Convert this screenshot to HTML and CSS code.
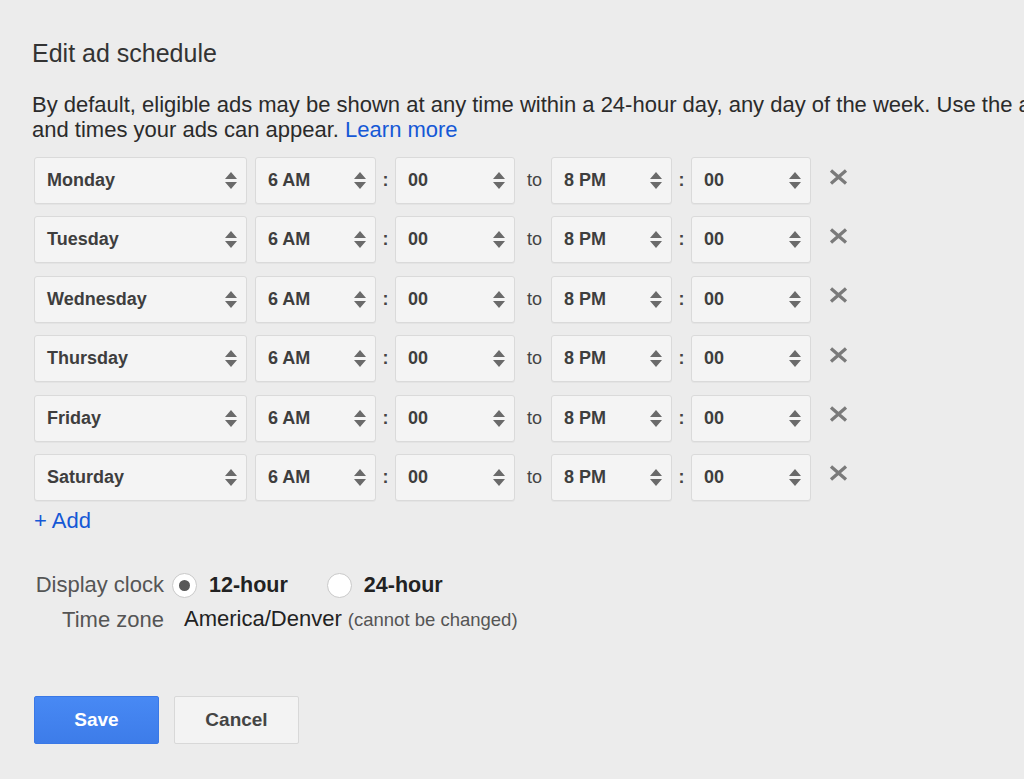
FILE: index.html
```html
<!DOCTYPE html>
<html>
<head>
<meta charset="utf-8">
<link rel="stylesheet" href="styles.css">
</head>
<body>
<div class="page">
  <h1 class="title">Edit ad schedule</h1>
  <p class="intro">By default, eligible ads may be shown at any time within a 24-hour day, any day of the week. Use the ad schedule to choose the days<br>and times your ads can appear. <a class="link" href="#">Learn more</a></p>

  <div class="rows">
    <div class="row">
      <div class="select day"><span>Monday</span><svg class="arr" viewBox="0 0 12 17"><path d="M6 0L12 7H0Z M0 10H12L6 17Z"/></svg></div>
      <div class="select hr"><span>6 AM</span><svg class="arr" viewBox="0 0 12 17"><path d="M6 0L12 7H0Z M0 10H12L6 17Z"/></svg></div>
      <span class="colon">:</span>
      <div class="select mn"><span>00</span><svg class="arr" viewBox="0 0 12 17"><path d="M6 0L12 7H0Z M0 10H12L6 17Z"/></svg></div>
      <span class="to">to</span>
      <div class="select hr"><span>8 PM</span><svg class="arr" viewBox="0 0 12 17"><path d="M6 0L12 7H0Z M0 10H12L6 17Z"/></svg></div>
      <span class="colon">:</span>
      <div class="select mn"><span>00</span><svg class="arr" viewBox="0 0 12 17"><path d="M6 0L12 7H0Z M0 10H12L6 17Z"/></svg></div>
      <svg class="rm" viewBox="0 0 19 16"><path d="M2 1.5L17 14.5M17 1.5L2 14.5"/></svg>
    </div>
    <div class="row">
      <div class="select day"><span>Tuesday</span><svg class="arr" viewBox="0 0 12 17"><path d="M6 0L12 7H0Z M0 10H12L6 17Z"/></svg></div>
      <div class="select hr"><span>6 AM</span><svg class="arr" viewBox="0 0 12 17"><path d="M6 0L12 7H0Z M0 10H12L6 17Z"/></svg></div>
      <span class="colon">:</span>
      <div class="select mn"><span>00</span><svg class="arr" viewBox="0 0 12 17"><path d="M6 0L12 7H0Z M0 10H12L6 17Z"/></svg></div>
      <span class="to">to</span>
      <div class="select hr"><span>8 PM</span><svg class="arr" viewBox="0 0 12 17"><path d="M6 0L12 7H0Z M0 10H12L6 17Z"/></svg></div>
      <span class="colon">:</span>
      <div class="select mn"><span>00</span><svg class="arr" viewBox="0 0 12 17"><path d="M6 0L12 7H0Z M0 10H12L6 17Z"/></svg></div>
      <svg class="rm" viewBox="0 0 19 16"><path d="M2 1.5L17 14.5M17 1.5L2 14.5"/></svg>
    </div>
    <div class="row">
      <div class="select day"><span>Wednesday</span><svg class="arr" viewBox="0 0 12 17"><path d="M6 0L12 7H0Z M0 10H12L6 17Z"/></svg></div>
      <div class="select hr"><span>6 AM</span><svg class="arr" viewBox="0 0 12 17"><path d="M6 0L12 7H0Z M0 10H12L6 17Z"/></svg></div>
      <span class="colon">:</span>
      <div class="select mn"><span>00</span><svg class="arr" viewBox="0 0 12 17"><path d="M6 0L12 7H0Z M0 10H12L6 17Z"/></svg></div>
      <span class="to">to</span>
      <div class="select hr"><span>8 PM</span><svg class="arr" viewBox="0 0 12 17"><path d="M6 0L12 7H0Z M0 10H12L6 17Z"/></svg></div>
      <span class="colon">:</span>
      <div class="select mn"><span>00</span><svg class="arr" viewBox="0 0 12 17"><path d="M6 0L12 7H0Z M0 10H12L6 17Z"/></svg></div>
      <svg class="rm" viewBox="0 0 19 16"><path d="M2 1.5L17 14.5M17 1.5L2 14.5"/></svg>
    </div>
    <div class="row">
      <div class="select day"><span>Thursday</span><svg class="arr" viewBox="0 0 12 17"><path d="M6 0L12 7H0Z M0 10H12L6 17Z"/></svg></div>
      <div class="select hr"><span>6 AM</span><svg class="arr" viewBox="0 0 12 17"><path d="M6 0L12 7H0Z M0 10H12L6 17Z"/></svg></div>
      <span class="colon">:</span>
      <div class="select mn"><span>00</span><svg class="arr" viewBox="0 0 12 17"><path d="M6 0L12 7H0Z M0 10H12L6 17Z"/></svg></div>
      <span class="to">to</span>
      <div class="select hr"><span>8 PM</span><svg class="arr" viewBox="0 0 12 17"><path d="M6 0L12 7H0Z M0 10H12L6 17Z"/></svg></div>
      <span class="colon">:</span>
      <div class="select mn"><span>00</span><svg class="arr" viewBox="0 0 12 17"><path d="M6 0L12 7H0Z M0 10H12L6 17Z"/></svg></div>
      <svg class="rm" viewBox="0 0 19 16"><path d="M2 1.5L17 14.5M17 1.5L2 14.5"/></svg>
    </div>
    <div class="row">
      <div class="select day"><span>Friday</span><svg class="arr" viewBox="0 0 12 17"><path d="M6 0L12 7H0Z M0 10H12L6 17Z"/></svg></div>
      <div class="select hr"><span>6 AM</span><svg class="arr" viewBox="0 0 12 17"><path d="M6 0L12 7H0Z M0 10H12L6 17Z"/></svg></div>
      <span class="colon">:</span>
      <div class="select mn"><span>00</span><svg class="arr" viewBox="0 0 12 17"><path d="M6 0L12 7H0Z M0 10H12L6 17Z"/></svg></div>
      <span class="to">to</span>
      <div class="select hr"><span>8 PM</span><svg class="arr" viewBox="0 0 12 17"><path d="M6 0L12 7H0Z M0 10H12L6 17Z"/></svg></div>
      <span class="colon">:</span>
      <div class="select mn"><span>00</span><svg class="arr" viewBox="0 0 12 17"><path d="M6 0L12 7H0Z M0 10H12L6 17Z"/></svg></div>
      <svg class="rm" viewBox="0 0 19 16"><path d="M2 1.5L17 14.5M17 1.5L2 14.5"/></svg>
    </div>
    <div class="row">
      <div class="select day"><span>Saturday</span><svg class="arr" viewBox="0 0 12 17"><path d="M6 0L12 7H0Z M0 10H12L6 17Z"/></svg></div>
      <div class="select hr"><span>6 AM</span><svg class="arr" viewBox="0 0 12 17"><path d="M6 0L12 7H0Z M0 10H12L6 17Z"/></svg></div>
      <span class="colon">:</span>
      <div class="select mn"><span>00</span><svg class="arr" viewBox="0 0 12 17"><path d="M6 0L12 7H0Z M0 10H12L6 17Z"/></svg></div>
      <span class="to">to</span>
      <div class="select hr"><span>8 PM</span><svg class="arr" viewBox="0 0 12 17"><path d="M6 0L12 7H0Z M0 10H12L6 17Z"/></svg></div>
      <span class="colon">:</span>
      <div class="select mn"><span>00</span><svg class="arr" viewBox="0 0 12 17"><path d="M6 0L12 7H0Z M0 10H12L6 17Z"/></svg></div>
      <svg class="rm" viewBox="0 0 19 16"><path d="M2 1.5L17 14.5M17 1.5L2 14.5"/></svg>
    </div>
  </div>

  <a class="add" href="#">+ Add</a>

  <div class="settings">
    <div class="label">Display clock</div>
    <div class="clock">
      <span class="radio checked"></span><span class="opt">12-hour</span>
      <span class="radio second"></span><span class="opt">24-hour</span>
    </div>
    <div class="label">Time zone</div>
    <div class="tz"><span class="tz-name">America/Denver</span> <span class="tz-note">(cannot be changed)</span></div>
  </div>

  <div class="actions">
    <button class="btn save">Save</button>
    <button class="btn cancel">Cancel</button>
  </div>
</div>
</body>
</html>
```

FILE: styles.css
```css
html, body {
  margin: 0;
  padding: 0;
  background: #ececec;
  overflow: hidden;
}
body {
  width: 1024px;
  height: 779px;
  font-family: "Liberation Sans", Arial, sans-serif;
  color: #333;
}
.page {
  padding-left: 32px;
}
.title {
  margin: 38px 0 0;
  font-size: 25px;
  line-height: 30px;
  font-weight: normal;
  color: #333;
}
.intro {
  margin: 25px 0 0;
  font-size: 22px;
  line-height: 24.5px;
  white-space: nowrap;
  color: #2b2b2b;
}
.link {
  color: #1558d6;
  text-decoration: none;
}
.rows {
  margin-top: 15px;
  padding-left: 2px;
  display: flex;
  flex-direction: column;
  gap: 12.4px;
}
.row {
  display: flex;
  align-items: center;
  height: 47px;
}
.select {
  box-sizing: border-box;
  height: 47px;
  display: flex;
  align-items: center;
  justify-content: space-between;
  padding: 0 9px 0 12px;
  background: #f4f4f4;
  border: 1px solid #dadada;
  border-radius: 3px;
  box-shadow: 0 1px 0 rgba(0,0,0,0.03);
  font-size: 18px;
  font-weight: bold;
  color: #3e3e3e;
}
.select.day { width: 213px; }
.select.hr { width: 121px; }
.select.mn { width: 120px; }
.day + .hr { margin-left: 8px; }
.arr {
  width: 12px;
  height: 17px;
  fill: #6a6a6a;
}
.colon {
  width: 19px;
  text-align: center;
  font-size: 18px;
  font-weight: bold;
  color: #444;
}
.to {
  width: 36px;
  padding-left: 12px;
  box-sizing: border-box;
  font-size: 18px;
  color: #444;
}
.rm {
  width: 19px;
  height: 16px;
  margin-left: 18px;
  margin-bottom: 8px;
  stroke: #7a7a7a;
  stroke-width: 3.3;
  fill: none;
}
.add {
  display: inline-block;
  margin-top: 7.5px;
  margin-left: 2px;
  font-size: 22px;
  line-height: 25px;
  color: #1558d6;
  text-decoration: none;
}
.settings {
  margin-top: 35px;
  display: grid;
  grid-template-columns: 132px auto;
  column-gap: 8px;
  row-gap: 4px;
  align-items: center;
}
.label {
  text-align: right;
  font-size: 22px;
  line-height: 26px;
  color: #555;
}
.clock {
  display: flex;
  align-items: center;
  height: 34px;
}
.radio {
  box-sizing: border-box;
  width: 25px;
  height: 25px;
  border-radius: 50%;
  background: #fff;
  border: 1px solid #c9c9c9;
  display: flex;
  align-items: center;
  justify-content: center;
  flex: none;
}
.radio.checked::after {
  content: "";
  width: 11px;
  height: 11px;
  border-radius: 50%;
  background: #585858;
}
.radio.second {
  margin-left: 39px;
}
.opt {
  margin-left: 12px;
  font-size: 21.5px;
  line-height: 26px;
  font-weight: bold;
  color: #222;
}
.tz {
  padding-left: 12px;
  font-size: 22px;
  line-height: 26px;
  color: #222;
}
.tz-note {
  font-size: 18.5px;
  color: #555;
}
.actions {
  margin-top: 63px;
  padding-left: 2px;
  display: flex;
  gap: 15px;
}
.btn {
  box-sizing: border-box;
  width: 125px;
  height: 48px;
  border-radius: 2px;
  font-family: "Liberation Sans", Arial, sans-serif;
  font-size: 19px;
  font-weight: bold;
  cursor: pointer;
}
.save {
  background: linear-gradient(#4889f4, #3d7ce9);
  border: 1px solid #3a78e6;
  color: #fff;
}
.cancel {
  background: #f3f3f3;
  border: 1px solid #d8d8d8;
  color: #444;
}
```
